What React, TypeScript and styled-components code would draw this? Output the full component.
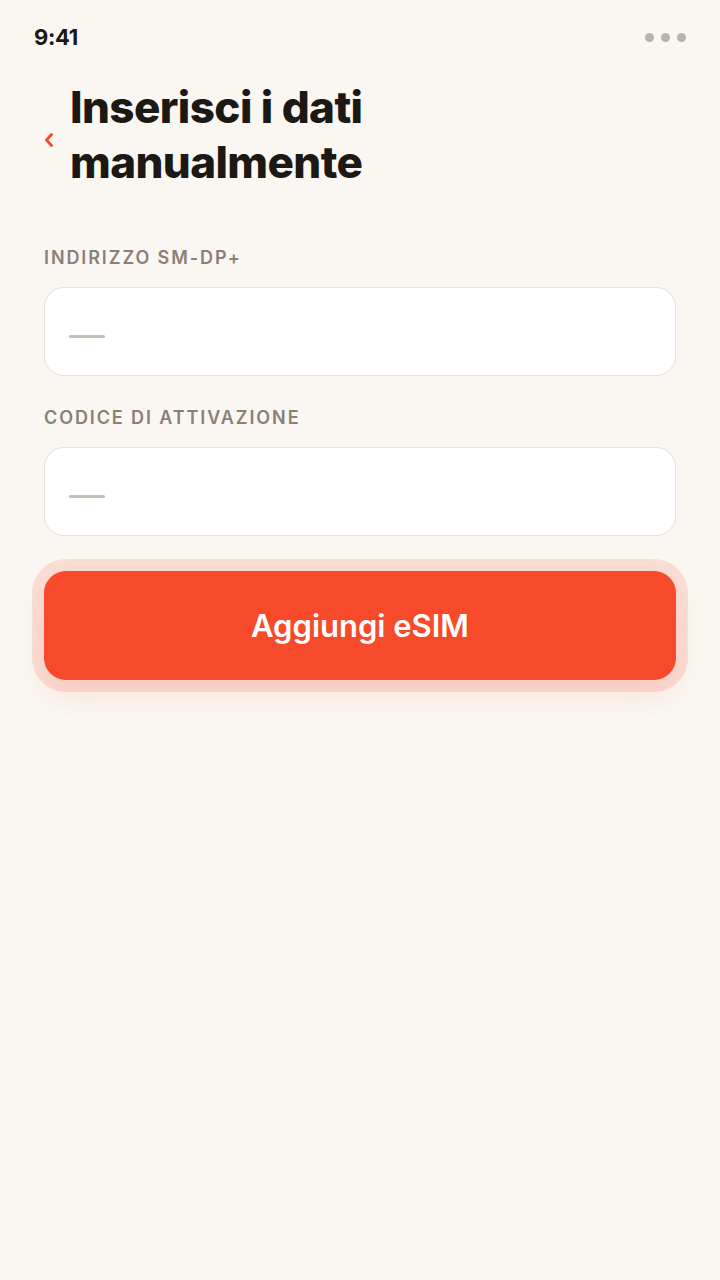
import React from "react";
import styled, { createGlobalStyle } from "styled-components";

const GlobalStyle = createGlobalStyle`
    html, body {
        margin: 0;
        padding: 0;
        background: #faf7f2;
    }
    body {
        font-family: Inter, "Noto Sans", sans-serif;
        -webkit-font-smoothing: antialiased;
    }
`;

const Screen = styled.div`
    width: 720px;
    min-height: 1280px;
    background: #faf7f2;
    box-sizing: border-box;
    display: flex;
    flex-direction: column;
`;

const StatusBar = styled.div`
    height: 74px;
    padding: 0 34px;
    display: flex;
    align-items: center;
    justify-content: space-between;
    box-sizing: border-box;
`;

const Time = styled.span`
    font-size: 22px;
    font-weight: 700;
    color: #1c1814;
    letter-spacing: -0.3px;
`;

const Dots = styled.div`
    display: flex;
    gap: 7px;
`;

const Dot = styled.span`
    width: 9px;
    height: 9px;
    border-radius: 50%;
    background: #b9b1aa;
`;

const Header = styled.div`
    display: flex;
    align-items: center;
    gap: 16px;
    padding: 6px 44px 0;
`;

const BackButton = styled.button`
    border: 0;
    background: none;
    padding: 0;
    margin-top: 10px;
    width: 10px;
    display: flex;
    align-items: center;
    cursor: pointer;
`;

const Title = styled.h1`
    margin: 0;
    font-size: 44px;
    line-height: 55px;
    font-weight: 800;
    letter-spacing: -0.6px;
    color: #1c1814;
`;

const Form = styled.div`
    display: flex;
    flex-direction: column;
    padding: 57px 44px 0;
`;

const Field = styled.div`
    display: flex;
    flex-direction: column;
    gap: 18px;
    margin-bottom: 31px;
`;

const Label = styled.label`
    font-size: 18px;
    line-height: 22px;
    font-weight: 600;
    letter-spacing: 1.9px;
    color: #8a8078;
    text-transform: uppercase;
`;

const InputBox = styled.div`
    height: 89px;
    box-sizing: border-box;
    background: #ffffff;
    border: 1.5px solid #e7e0d7;
    border-radius: 20px;
    display: flex;
    align-items: center;
    padding: 0 24px;
`;

const Placeholder = styled.span`
    width: 36px;
    height: 3px;
    margin-top: 10px;
    border-radius: 2px;
    background: #c6bdb5;
`;

const PrimaryButton = styled.button`
    margin-top: 4px;
    height: 109px;
    border: 0;
    border-radius: 22px;
    background: #f64a2a;
    color: #ffffff;
    font-family: Inter, "Noto Sans", sans-serif;
    font-size: 31px;
    font-weight: 600;
    letter-spacing: 0;
    box-shadow: 0 0 0 12px rgba(246, 74, 42, 0.14),
        0 16px 30px rgba(246, 74, 42, 0.12);
    cursor: pointer;
`;

const ChevronLeft = () => (
    <svg width="10" height="14" viewBox="0 0 10 14" fill="none">
        <path
            d="M7.5 1.5L2.5 7l5 5.5"
            stroke="#f64a2a"
            strokeWidth="2.8"
            strokeLinecap="round"
            strokeLinejoin="round"
        />
    </svg>
);

const fields = ["Indirizzo SM-DP+", "Codice di attivazione"];

export default function App() {
    return (
        <>
            <GlobalStyle />
            <Screen>
                <StatusBar>
                    <Time>9:41</Time>
                    <Dots>
                        <Dot />
                        <Dot />
                        <Dot />
                    </Dots>
                </StatusBar>
                <Header>
                    <BackButton aria-label="Indietro">
                        <ChevronLeft />
                    </BackButton>
                    <Title>
                        Inserisci i dati
                        <br />
                        manualmente
                    </Title>
                </Header>
                <Form>
                    {fields.map(label => (
                        <Field key={label}>
                            <Label>{label}</Label>
                            <InputBox>
                                <Placeholder />
                            </InputBox>
                        </Field>
                    ))}
                    <PrimaryButton>Aggiungi eSIM</PrimaryButton>
                </Form>
            </Screen>
        </>
    );
}
